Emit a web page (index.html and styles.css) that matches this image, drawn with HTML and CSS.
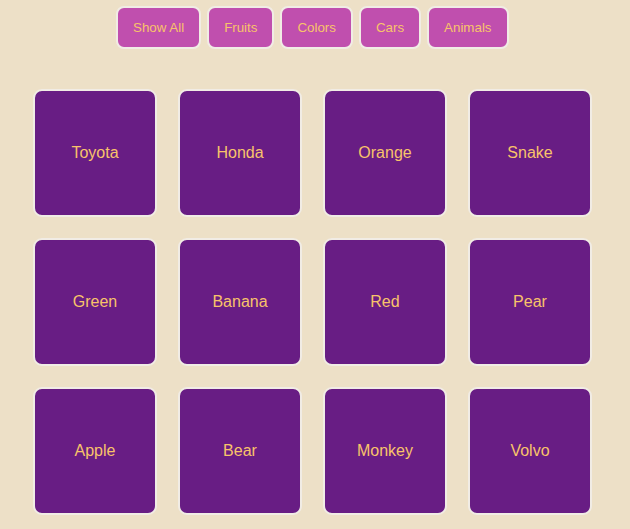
FILE: index.html
```html
<!DOCTYPE html>
<html>
<head>
<meta charset="utf-8">
<link rel="stylesheet" href="styles.css">
</head>
<body>
<div class="filters">
  <button class="btn">Show All</button>
  <button class="btn">Fruits</button>
  <button class="btn">Colors</button>
  <button class="btn">Cars</button>
  <button class="btn">Animals</button>
</div>
<div class="grid">
  <div class="card">Toyota</div>
  <div class="card">Honda</div>
  <div class="card">Orange</div>
  <div class="card">Snake</div>
  <div class="card">Green</div>
  <div class="card">Banana</div>
  <div class="card">Red</div>
  <div class="card">Pear</div>
  <div class="card">Apple</div>
  <div class="card">Bear</div>
  <div class="card">Monkey</div>
  <div class="card">Volvo</div>
</div>
</body>
</html>
```
FILE: styles.css
```css
html, body {
  margin: 0;
  padding: 0;
  background: #ede0c7;
  font-family: "Liberation Sans", Arial, sans-serif;
}
.filters {
  display: flex;
  gap: 6px;
  padding: 6px 0 0 116px;
}
.btn {
  box-sizing: border-box;
  height: 43px;
  padding: 0 15px;
  border: 2px solid #f1ece5;
  border-radius: 8px;
  background: #c04fae;
  color: #f8c36a;
  font-family: "Liberation Sans", Arial, sans-serif;
  font-size: 13.33px;
}
.grid {
  display: grid;
  grid-template-columns: repeat(4, 124px);
  column-gap: 21px;
  row-gap: 21px;
  padding: 40px 0 0 33px;
}
.card {
  box-sizing: border-box;
  height: 128px;
  border: 2px solid #f1ece5;
  border-radius: 9px;
  background: #681d84;
  color: #f8c36a;
  font-size: 16px;
  display: flex;
  align-items: center;
  justify-content: center;
}
```
